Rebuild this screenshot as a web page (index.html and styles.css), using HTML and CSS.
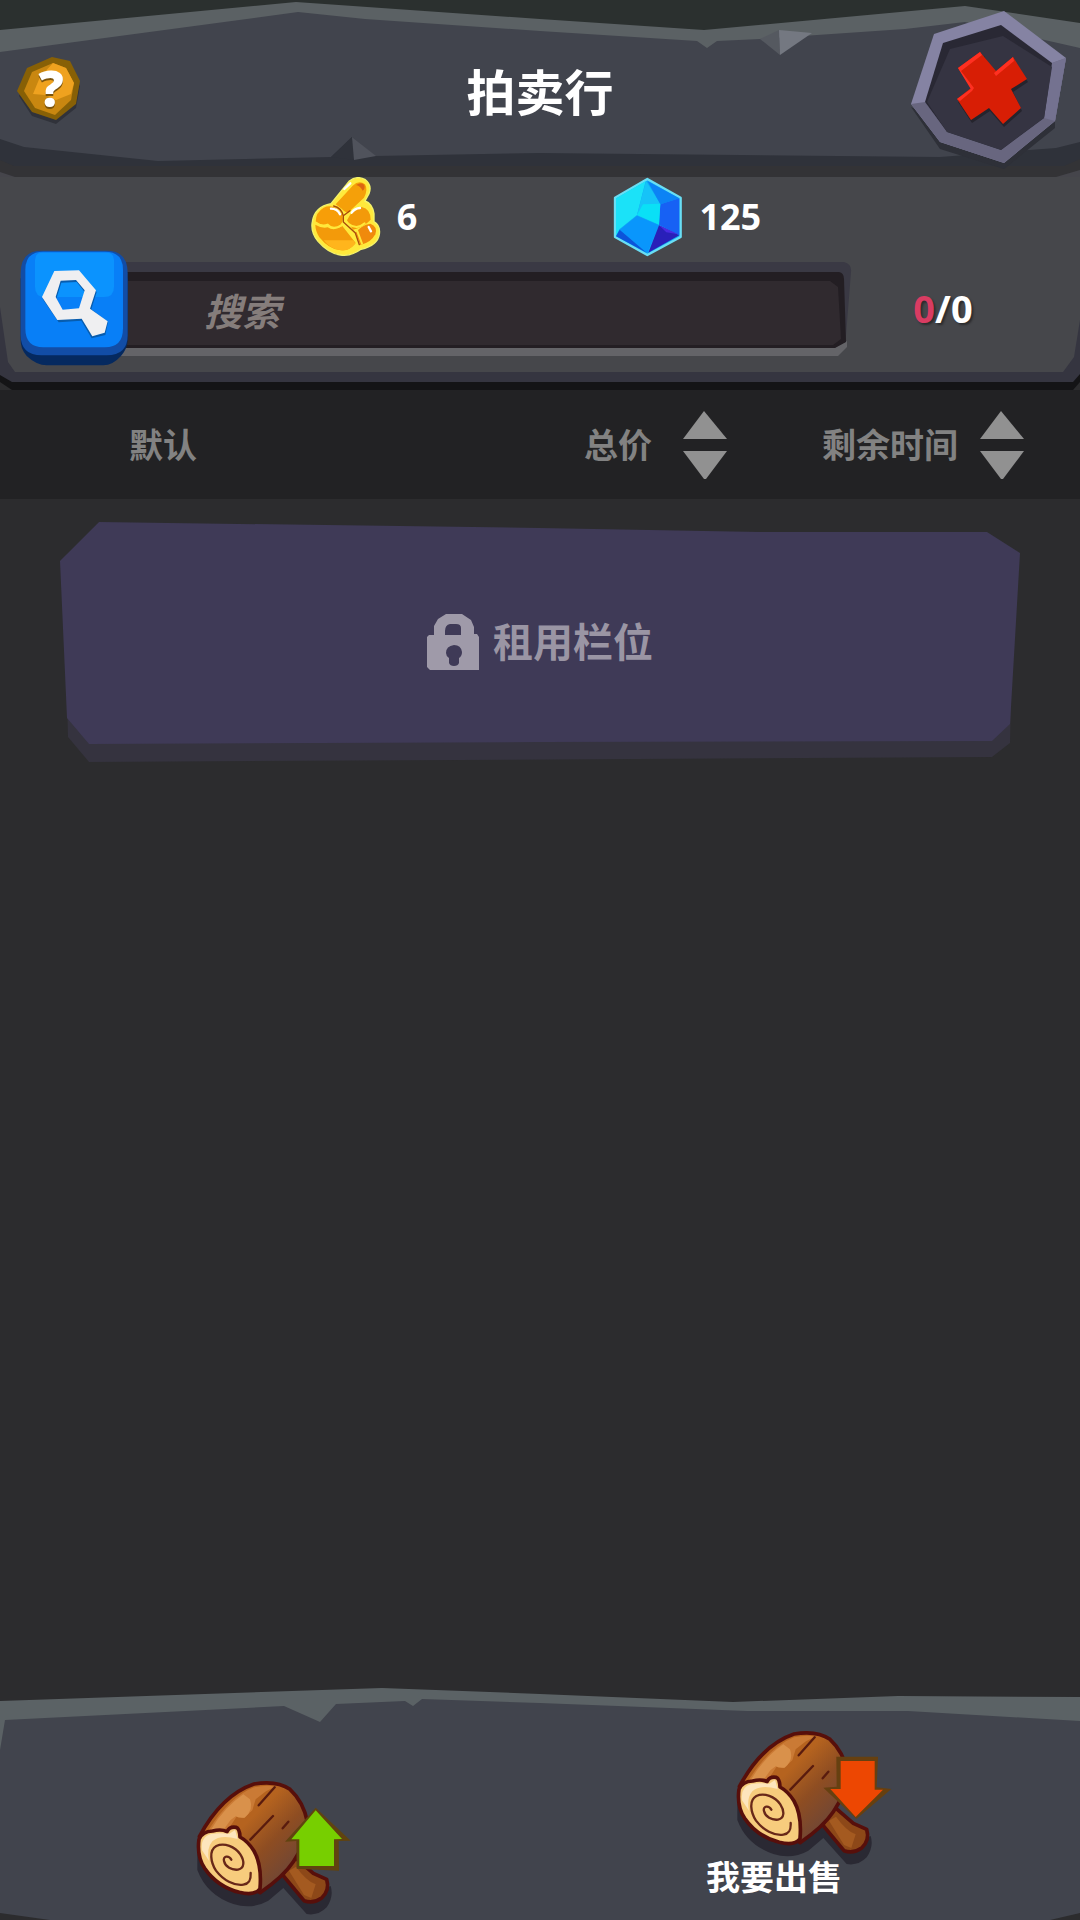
FILE: index.html
```html
<!DOCTYPE html>
<html lang="zh-CN">
<head>
  <meta charset="utf-8">
  <meta name="viewport" content="width=device-width, initial-scale=1">
  <title>拍卖行</title>
  <link rel="stylesheet" href="styles.css">
</head>
<body>
  <header class="top">
    <svg class="backdrop" viewBox="0 0 1080 177" preserveAspectRatio="none" aria-hidden="true">
      <path fill="#333336" d="M0 140H1080V177H0z"/>
      <path fill="#45454b" d="M0 172L15 177H0zM1080 170L1056 177H1080z"/>
      <path fill="#2f323a" d="M0 100H1080V159L1064 166H14L0 160z"/>
      <path fill="#5b6164" d="M0 30L296 2L540 19L704 30L965 6L1080 23V90H0z"/>
      <path fill="#41444d" d="M0 52L298 12L365 19L540 31L697 41L707 48L717 41L760 39L905 29L965 22L1080 48V142L1056 148L940 157L540 153L375 156L352 137L331 157L158 161L24 147L0 139z"/>
      <path fill="#555960" d="M760 39L779 30L780 55z"/>
      <path fill="#747881" d="M779 30L812 33L780 55z"/>
      <path fill="#2f323a" d="M331 157L352 137L355 160z"/>
      <path fill="#50535c" d="M352 137L376 156L354 160z"/>
    </svg>
    <button class="icon-button" type="button" aria-label="帮助">
      <svg width="70" height="70" viewBox="15 53 70 70">
        <path fill="#30323a" d="M28 71L53 61L71 65L81 85L77 107L57 123L33 115L20 95z"/>
        <path fill="#876006" d="M53 56L71 60L81 80L77 103L57 119L33 111L18 90L28 67z"/>
        <path fill="#c98710" d="M54 62L67 67L75 82L72 99L56 114L36 107L25 90L33 71z"/>
        <path fill="#efa21f" d="M54 62L67 67L75 82L72 93L57 99L46 94L34 93L41 76z"/>
        <text class="help-mark" x="52" y="108" text-anchor="middle" fill="#7a530c">?</text>
        <text class="help-mark" x="52" y="106" text-anchor="middle" fill="#fff">?</text>
      </svg>
    </button>
    <h1 class="title">拍卖行</h1>
    <button class="icon-button close" type="button" aria-label="关闭">
      <svg width="156" height="164" viewBox="909 6 156 164">
        <path fill="#2e3038" d="M910 106L939 148L1003 168L1054 127L1054 115L1003 150z"/>
        <path fill="#8583a3" d="M1003 10L1065 57L1054 120L1003 162L939 141L910 103L933 33z"/>
        <path fill="#68667f" d="M910 103L924 101L946 131L1000 149L1043 117L1051 62L1065 57L1054 120L1003 162L939 141z"/>
        <path fill="#747290" d="M1051 62L1065 57L1054 120L1043 117z"/>
        <path fill="#292834" d="M1000 24L1051 62L1043 117L1000 149L946 131L924 101L942 42z"/>
        <path fill="#353442" d="M1002 35L1051 66L1043 117L1000 149L946 131L926 101L949 48z"/>
        <path fill="#25242d" d="M983 55L995 75L1014 60L1027 81L1012 91L1021 110L1003 126L989 110L971 122L957 101L971 91z"/>
        <path fill="#d81e05" d="M979 51L995 70L1012 56L1026 78L1010 88L1020 107L1002 123L988 107L970 119L956 98L970 87L957 67z"/>
        <path fill="#ff3021" d="M979 51L981 54L960 70L973 87L971 90L957 67zM1012 56L1013 60L995 75L993 72zM956 98L971 87L971 90L959 100z"/>
      </svg>
    </button>
  </header>

  <section class="panel">
    <svg class="backdrop" viewBox="0 0 1080 213" preserveAspectRatio="none" aria-hidden="true">
      <path fill="#141416" d="M0 190H1080V205L1073 213H12L0 205z"/>
      <path fill="#353540" d="M0 0H1080V197L1073 205H12L0 198z"/>
      <path fill="#46474b" d="M0 0H1080V143L1074 180L1063 195H15L8 185L0 130z"/>
    </svg>
    <div class="wallet">
      <div class="currency">
        <svg width="70" height="80" viewBox="90 50 210 240" aria-hidden="true">
          <path fill="#ffe93c" stroke="#f4f36a" stroke-width="4" d="M150 130L205 62Q228 44 253 58Q274 74 264 100L252 122Q274 130 279 160V184Q299 196 295 222Q290 255 240 267Q210 289 178 284Q142 279 111 243Q88 215 94 184Q101 139 150 130z"/>
          <path fill="#f5a009" d="M164 132L215 76Q234 58 252 72Q262 88 249 112L200 158Q188 153 182 145z"/>
          <path fill="#dc6512" d="M225 74Q242 63 250 74Q253 86 245 91Q239 78 225 74z"/>
          <path fill="#f79e08" d="M104 184Q104 156 128 142Q160 128 184 164Q190 188 170 200Q150 205 140 193Q125 198 104 184z"/>
          <path fill="#f39a0a" d="M103 193Q125 206 140 201Q160 214 184 197L224 248Q201 275 176 269Q144 267 115 231Q103 211 103 193zM198 180Q216 143 242 140Q269 146 269 178Q246 202 216 208z"/>
          <path fill="#f08a0c" d="M224 217Q241 194 268 190Q291 199 283 222Q270 247 238 254z"/>
          <path fill="#ffb51c" d="M128 240L218 240L223 250Q202 275 176 269Q148 266 128 240z"/>
          <path fill="none" stroke="#ffe83b" stroke-width="6" stroke-linecap="round" d="M103 186Q122 201 140 193Q155 211 181 195M202 190Q227 210 251 189M228 210L243 250"/>
          <path fill="none" stroke="#a94a0b" stroke-width="4" stroke-linecap="round" d="M158 137Q181 142 187 167V185L223 218L235 253M190 164L207 151"/>
          <path fill="none" stroke="#fff" stroke-width="7" stroke-linecap="round" d="M190 86L208 69M150 145Q169 145 177 162M212 157Q221 144 237 143M263 200L270 213"/>
        </svg>
        <span>6</span>
      </div>
      <div class="currency">
        <svg width="70" height="80" viewBox="1000 50 210 240" aria-hidden="true">
          <path fill="#10aef5" stroke="#69def4" stroke-width="7" stroke-linejoin="round" d="M1103 56L1203 112V230L1103 284L1006 230V112z"/>
          <path fill="#1be2f8" d="M1098 62L1072 164L1019 207L1009 228V114z"/>
          <path fill="#16c3f8" d="M1099 62L1142 130L1137 192L1072 164z"/>
          <path fill="#0c83f5" d="M1103 62L1199 114L1142 132z"/>
          <path fill="#1761f4" d="M1199 114V225L1138 193L1142 132z"/>
          <path fill="#0ae0f6" d="M1090 132L1142 130L1138 193L1072 164z"/>
          <path fill="#0996fc" d="M1072 166L1138 195L1103 278L1020 208z"/>
          <path fill="#0c54da" d="M1020 208L1101 277L1009 228z"/>
          <path fill="#291fb9" d="M1138 195L1199 225L1106 277z"/>
          <path fill="#482ae2" d="M1138 195L1196 222L1160 216z"/>
        </svg>
        <span>125</span>
      </div>
    </div>
    <form class="search">
      <button class="icon-button search-button" type="button" aria-label="搜索">
        <svg width="108" height="116" viewBox="60 60 324 348">
          <path fill="#05295f" d="M62 145H383V330Q383 355 363 378Q338 406 310 406H140Q110 406 80 378Q60 355 62 325z"/>
          <path fill="#124da6" d="M62 130Q62 62 125 62H320Q383 62 383 130V315Q383 376 320 376H125Q62 376 62 315z"/>
          <path fill="#087ff7" d="M76 120Q76 65 130 65H315Q369 65 369 120V295Q369 352 315 352H130Q76 352 76 295z"/>
          <path fill="#0b93fe" d="M105 90Q105 68 127 68H320Q342 68 342 90V170Q342 201 312 201H135Q105 201 105 170z"/>
          <path fill="#075cae" fill-rule="evenodd" d="M163 131L237 128L290 186L274 238L324 276L316 315L275 325L244 272L176 277L128 207zM184 158L230 156L254 186L239 242L188 244L169 206z"/>
          <path fill="#efeff1" fill-rule="evenodd" d="M163 123L237 121L288 181L270 236L323 274L314 308L277 319L245 266L172 270L126 201zM182 152L228 150L254 181L237 235L188 239L167 201z"/>
        </svg>
      </button>
      <div class="search-field">
        <svg class="backdrop" viewBox="0 0 732 97" preserveAspectRatio="none" aria-hidden="true">
          <path fill="#3a3944" d="M0 2H724Q732 4 731 12L725 88H0z"/>
          <path fill="#646468" d="M0 88L714 88L727 81V87L718 96H0z"/>
          <path fill="#231e23" d="M0 12H719Q724 13 724 19L726 82L715 88H0z"/>
          <path fill="#302a2f" d="M0 21H710L718 27L721 79L713 85H0z"/>
        </svg>
        <input class="search-input" type="text" placeholder="搜索" aria-label="搜索">
      </div>
      <p class="count"><span class="count-used">0</span>/0</p>
    </form>
  </section>

  <nav class="sort">
    <button class="sort-button sort-default" type="button">默认</button>
    <button class="sort-button sort-price" type="button">
      总价
      <svg width="46" height="70" viewBox="0 0 46 70" aria-hidden="true">
        <path d="M22 1L45 29H1z"/>
        <path d="M1 41H45L24 69H22z"/>
      </svg>
    </button>
    <button class="sort-button sort-time" type="button">
      剩余时间
      <svg width="46" height="70" viewBox="0 0 46 70" aria-hidden="true">
        <path d="M22 1L45 29H1z"/>
        <path d="M1 41H45L24 69H22z"/>
      </svg>
    </button>
  </nav>

  <main class="slots">
    <button class="slot" type="button">
      <svg class="backdrop" viewBox="61 522 959 240" preserveAspectRatio="none" aria-hidden="true">
        <path fill="#35333f" d="M68 700H1011L1010 743L992 757L90 762L69 737z"/>
        <path fill="#3f3a57" d="M100 522L540 528L760 532H987L1020 553L1010 724L992 741L540 742L90 744L68 718L61 561z"/>
      </svg>
      <svg class="lock" width="52" height="56" viewBox="0 0 52 56" aria-hidden="true">
        <path fill="#9f9aa9" fill-rule="evenodd" d="M19 0H35L44 6L47 13V20H50L52 23V56H3L0 53V23L2 21H7V12L11 5zM18 21H34V14Q34 10 29 10H23Q18 11 18 17zM27 31Q19 32 19 39Q19 42 22 44V49Q23 52 27 52Q31 52 32 49V44Q35 42 35 38Q34 31 27 31z"/>
      </svg>
      租用栏位
    </button>
  </main>

  <footer class="bottom">
    <svg class="backdrop" viewBox="0 1688 1080 232" preserveAspectRatio="none" aria-hidden="true">
      <path fill="#5b6265" d="M0 1701L382 1688L540 1694L733 1702L898 1696L1080 1697V1780H0z"/>
      <path fill="#41444d" d="M0 1750L5 1720L284 1706L320 1722L336 1704L405 1701L413 1706L422 1699L540 1703L747 1711H908L1080 1721V1913L1050 1920H50L0 1913z"/>
    </svg>

    <!-- the hammer is shared by both buttons -->
    <svg class="defs" width="0" height="0" aria-hidden="true">
      <defs>
        <linearGradient id="wood" x1="0" y1="0" x2="1" y2="1">
          <stop offset="0.4" stop-color="#b5631f"/>
          <stop offset="0.6" stop-color="#8e4d22"/>
          <stop offset="0.8" stop-color="#734733"/>
        </linearGradient>
        <g id="hammer">
          <path fill="#2a2933" d="M52 280L100 350Q160 400 240 395L305 350L365 408L452 378Q462 410 440 442Q415 468 380 462L310 384L265 422Q215 450 160 432Q80 405 52 330z"/>
          <path fill="#8d4818" stroke="#570f0b" stroke-width="11" stroke-linejoin="round" d="M308 345L342 290L400 340L440 358Q450 390 425 414Q400 432 372 422z"/>
          <path fill="#a45a20" d="M327 332L348 320Q378 362 407 373L394 414L372 405z"/>
          <path fill="url(#wood)" stroke="#570f0b" stroke-width="11" stroke-linejoin="round" d="M58 230Q125 105 222 72Q290 60 330 88Q370 125 382 185Q384 240 340 305Q310 350 240 398L105 290z"/>
          <path fill="#ca7a35" d="M85 211Q150 110 222 82Q260 74 285 80L258 94L227 118L217 151L191 174L171 168L145 208z"/>
          <path fill="#d9914b" d="M94 207Q133 142 190 103L210 118Q222 150 194 173Q178 175 167 169L151 181L132 208z"/>
          <path fill="#f7cc7d" stroke="#570f0b" stroke-width="11" stroke-linejoin="round" d="M57 238Q67 214 98 213Q124 206 141 215Q148 199 168 202Q179 206 180 231Q204 244 222 273Q246 315 240 386Q225 408 178 397Q112 380 74 325Q50 288 57 238z"/>
          <path fill="#fde5bd" d="M66 271Q61 230 94 222Q125 217 147 222L165 210L173 237Q121 222 97 244Q79 265 87 302z"/>
          <path fill="none" stroke="#682819" stroke-width="7" stroke-linecap="round" d="M154 299C146 285 128 288 132 303C136 321 155 331 174 329C194 325 194 303 181 283C165 260 133 247 109 258C86 271 92 307 108 332C130 361 162 378 190 374C210 371 213 357 212 339"/>
          <path fill="none" stroke="#591b0e" stroke-width="7" stroke-linecap="round" d="M284 82L236 136M279 168L211 239M325 185L308 205"/>
        </g>
      </defs>
    </svg>

    <button class="trade" type="button" aria-label="我要购买">
      <svg width="180" height="155" viewBox="0 0 540 465">
        <use href="#hammer"/>
        <path fill="#60430f" d="M407 143L512 242L476 243L477 332L350 326L349 243L315 245z"/>
        <path fill="#77cf00" d="M407 151L486 237L462 238V318H358V238H334z"/>
      </svg>
    </button>
    <button class="trade trade-sell" type="button">
      <svg width="180" height="155" viewBox="0 0 540 465" aria-hidden="true">
        <use href="#hammer"/>
        <path fill="#664010" d="M349 140H474L470 232L514 237L409 327L310 233L350 230z"/>
        <path fill="#ed4702" d="M362 153H464V239H489L407 321L331 237H362z"/>
      </svg>
      <span class="trade-label">我要出售</span>
    </button>
  </footer>
</body>
</html>
```

FILE: styles.css
```css
* {
  box-sizing: border-box;
}
body {
  display: flex;
  flex-direction: column;
  min-height: 100vh;
  margin: 0;
  background: #2c2c2e;
  color: #fff;
  font-family: "Noto Sans", "Noto Sans CJK SC", sans-serif;
  font-weight: 700;
}
button {
  margin: 0;
  padding: 0;
  border: 0;
  background: none;
  color: inherit;
  font-family: inherit;
  font-weight: inherit;
  cursor: pointer;
}
svg {
  display: block;
}
/* stone shapes stretched behind the content of a block */
.backdrop {
  position: absolute;
  top: 0;
  left: 0;
  z-index: -1;
  width: 100%;
  height: 100%;
}
.defs {
  position: absolute;
}
.top, .panel, .search-field, .slot, .bottom {
  position: relative;
  z-index: 0;
}

/* header */
.top {
  display: grid;
  grid-template-columns: 1fr auto 1fr;
  align-items: center;
  height: 177px;
  padding: 0 14px;
  background: #2b302f;
}
.close {
  justify-self: end;
}
.icon-button {
  width: max-content;
}
.help-mark {
  font-family: "Open Sans", sans-serif;
  font-size: 50px;
  font-weight: 800;
}
.title {
  margin: 0;
  padding-top: 6px;
  font-size: 49px;
  line-height: 60px;
}

/* wallet and search */
.panel {
  padding-bottom: 24px;
}
.wallet {
  display: flex;
  justify-content: center;
  gap: 196px;
  padding-right: 8px;
}
.currency {
  display: flex;
  align-items: center;
  gap: 16px;
  font-size: 36px;
  line-height: 40px;
}
.search {
  display: flex;
  align-items: center;
  margin-top: -7px;
  padding: 0 46px 0 20px;
}
.search-button {
  position: relative;
  z-index: 1;
}
.search-field {
  flex: 1;
  height: 97px;
  margin-left: -8px;
}
.search-input {
  width: 100%;
  height: 100%;
  padding: 6px 24px 0 84px;
  border: 0;
  outline: 0;
  background: none;
  color: #fff;
  font-family: inherit;
  font-size: 38px;
  font-style: italic;
  font-weight: inherit;
}
.search-input::placeholder {
  color: #857d7b;
  opacity: 1;
}
.count {
  width: 182px;
  margin: 0;
  font-size: 38px;
  line-height: 40px;
  text-align: center;
  text-shadow: 2px 2px 2px #2c2c2e;
}
.count-used {
  color: #d93c62;
}

/* sort bar */
.sort {
  display: flex;
  align-items: center;
  height: 109px;
  padding: 0 55px 0 129px;
  background: #222224;
}
.sort-button {
  display: flex;
  align-items: center;
  gap: 21px;
  color: #828282;
  font-size: 34px;
  line-height: 40px;
}
.sort-button svg {
  fill: #919191;
}
.sort-default {
  margin-right: auto;
}
.sort-price {
  gap: 30px;
}
.sort-time {
  margin-left: 94px;
}

/* rented slots */
.slots {
  flex: 1;
  padding: 23px 60px;
}
.slot {
  display: flex;
  align-items: center;
  justify-content: center;
  gap: 14px;
  width: 100%;
  height: 240px;
  color: #9a95a4;
  font-size: 40px;
  line-height: 48px;
}

/* footer */
.bottom {
  display: grid;
  grid-template-columns: 1fr 1fr;
  justify-items: center;
  align-items: start;
  min-height: 232px;
}
.trade {
  display: flex;
  flex-direction: column;
  align-items: center;
  padding-top: 72px;
}
.trade-sell {
  padding-top: 22px;
}
.trade-label {
  margin-top: -8px;
  padding-right: 72px;
  font-size: 34px;
  line-height: 40px;
}
```
